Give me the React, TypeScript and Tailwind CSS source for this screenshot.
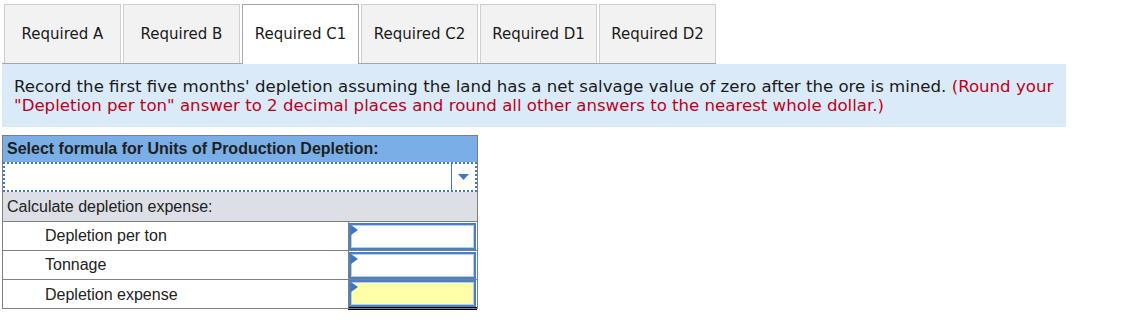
import React from 'react';

const tabs = ['Required A', 'Required B', 'Required C1', 'Required C2', 'Required D1', 'Required D2'];

function Tab({ label, active }: { label: string; active?: boolean }) {
  return active ? (
    <div className="relative -mb-px flex h-[60px] w-[117px] items-center justify-center border border-b-0 border-[#a6a6a6] bg-white pb-[1px] text-[15px] text-[#1a1a1a]">
      {label}
    </div>
  ) : (
    <div className="flex h-[59px] w-[117px] items-center justify-center border border-b-0 border-[#cfcfcf] bg-[#f2f2f2] pt-[1px] text-[15px] text-[#1a1a1a]">
      {label}
    </div>
  );
}

function AnswerInput({ yellow }: { yellow?: boolean }) {
  return (
    <div
      className={`relative h-[27px] border-2 border-[#4a80c8] outline outline-1 -outline-offset-3 outline-[#b3cdee] ${
        yellow ? 'bg-[#ffffaa]' : 'bg-white'
      }`}
    >
      <svg className="absolute left-0 top-0" width="8" height="12" viewBox="0 0 8 12">
        <polygon points="0,0 7,5 0,10" fill="#3f76c4" />
      </svg>
    </div>
  );
}

function InputRow({ label, yellow, last }: { label: string; yellow?: boolean; last?: boolean }) {
  return (
    <div className="grid h-[29px] grid-cols-[345px_1fr] border-t border-[#808080]">
      <div className="flex items-center pl-[42px] text-[16px] text-[#222]">{label}</div>
      <div
        className={`flex flex-col justify-center border-l border-[#808080] pr-[1px] ${
          last ? 'border-b-[3px] border-double border-b-black' : ''
        }`}
      >
        <AnswerInput yellow={yellow} />
      </div>
    </div>
  );
}

export default function App() {
  return (
    <div className="min-h-[320px] bg-white pl-[2px] pt-[4px]" style={{ fontFamily: '"DejaVu Sans", Verdana, sans-serif' }}>
      <div className="inline-flex items-end gap-[2px] border-b border-[#a6a6a6] pl-[2px]">
        {tabs.map((t) => (
          <Tab key={t} label={t} active={t === 'Required C1'} />
        ))}
      </div>

      <div className="w-[1064px] whitespace-nowrap bg-[#dbeaf8] px-[12px] pb-[12px] pt-[13px] text-[16.6px] leading-[19px] text-[#1a1a1a]">
        Record the first five months&apos; depletion assuming the land has a net salvage value of zero after the ore is mined.{' '}
        <span className="text-[#c0001a]">(Round your</span>
        <br />
        <span className="text-[#c0001a]">
          &quot;Depletion per ton&quot; answer to 2 decimal places and round all other answers to the nearest whole dollar.)
        </span>
      </div>

      <div
        className="mt-[8px] w-[476px] border border-[#808080] text-[16px] text-[#222]"
        style={{ fontFamily: '"Liberation Sans", Arial, sans-serif' }}
      >
        <div className="flex h-[26px] items-center bg-[#7aaee6] pl-[4px] font-bold text-[#1f1f1f]">
          Select formula for Units of Production Depletion:
        </div>
        <div className="flex h-[30px] border-2 border-dotted border-[#3b7acb] bg-white">
          <div className="flex-1" />
          <div className="flex w-[24px] items-center justify-center border-l border-[#3b7acb]">
            <svg width="11" height="6" viewBox="0 0 11 6">
              <polygon points="0,0 11,0 5.5,6" fill="#3b7acb" />
            </svg>
          </div>
        </div>
        <div className="flex h-[29px] items-center bg-[#dcdfe6] pl-[4px]">Calculate depletion expense:</div>
        <InputRow label="Depletion per ton" />
        <InputRow label="Tonnage" />
        <InputRow label="Depletion expense" yellow last />
      </div>
    </div>
  );
}
